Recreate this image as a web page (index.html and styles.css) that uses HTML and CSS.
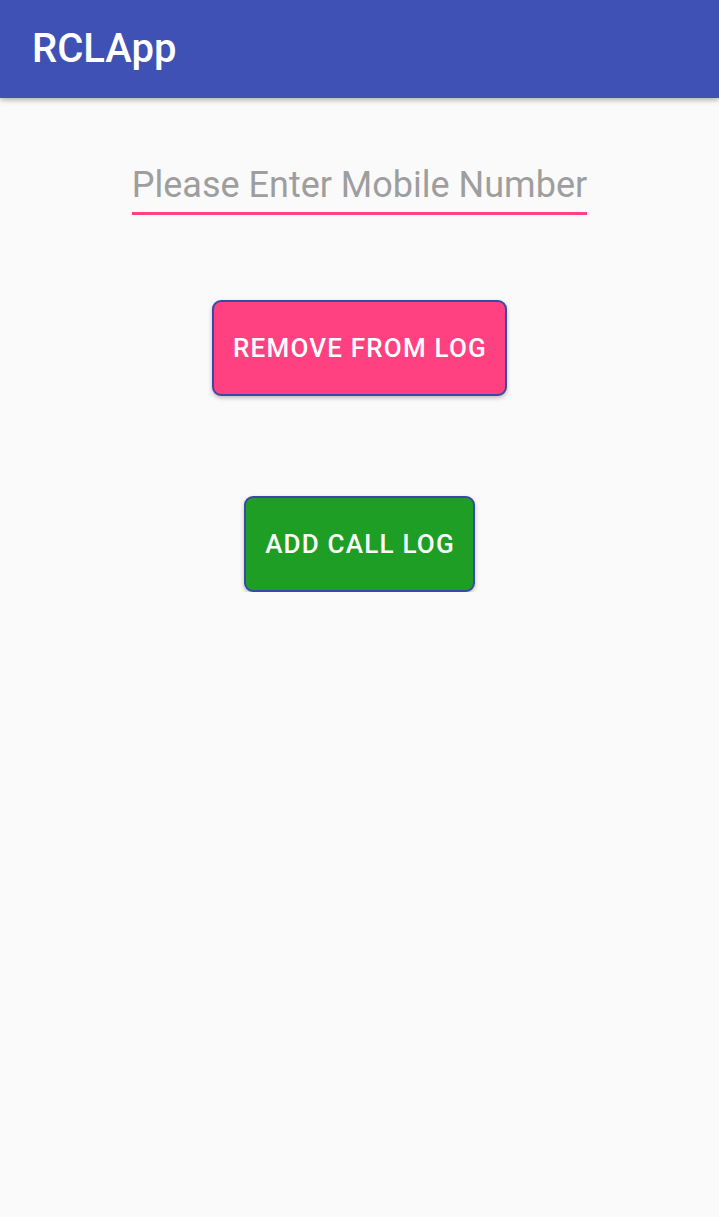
FILE: index.html
```html
<!DOCTYPE html>
<html>
<head>
<meta charset="utf-8">
<link rel="stylesheet" href="styles.css">
</head>
<body>
<header class="toolbar">
  <h1 class="title">RCLApp</h1>
</header>
<main class="content">
  <div class="field">
    <span class="hint">Please Enter Mobile Number</span>
  </div>
  <button class="btn btn-remove">REMOVE FROM LOG</button>
  <button class="btn btn-add">ADD CALL LOG</button>
</main>
</body>
</html>
```
FILE: styles.css
```css
html, body {
  margin: 0;
  padding: 0;
  background: #fafafa;
  font-family: Roboto, "Noto Sans", sans-serif;
}
.toolbar {
  height: 98px;
  background: #3f51b5;
  box-shadow: 0 2px 5px rgba(0,0,0,0.3);
  display: flex;
  align-items: center;
  padding-left: 32px;
  position: relative;
}
.title {
  margin: 0;
  color: #fff;
  font-size: 40px;
  font-weight: 500;
  line-height: 1;
}
.content {
  display: flex;
  flex-direction: column;
  align-items: center;
}
.field {
  margin-top: 63px;
  display: flex;
  flex-direction: column;
  border-bottom: 3px solid #ff4081;
  padding: 0 0 3px 0;
}
.hint {
  color: #9e9e9e;
  font-size: 36px;
  line-height: 48px;
}
.btn {
  font-family: Roboto, "Noto Sans", sans-serif;
  font-weight: 500;
  font-size: 26px;
  letter-spacing: 1.2px;
  color: #fff;
  border: 2px solid #3a48a8;
  border-radius: 9px;
  height: 96px;
  padding: 0 18px 0 19px;
  box-shadow: 0 2px 4px rgba(0,0,0,0.25);
  line-height: 1;
}
.btn-remove {
  margin-top: 85px;
  background: #ff4081;
}
.btn-add {
  margin-top: 100px;
  background: #1e9e24;
}
```
